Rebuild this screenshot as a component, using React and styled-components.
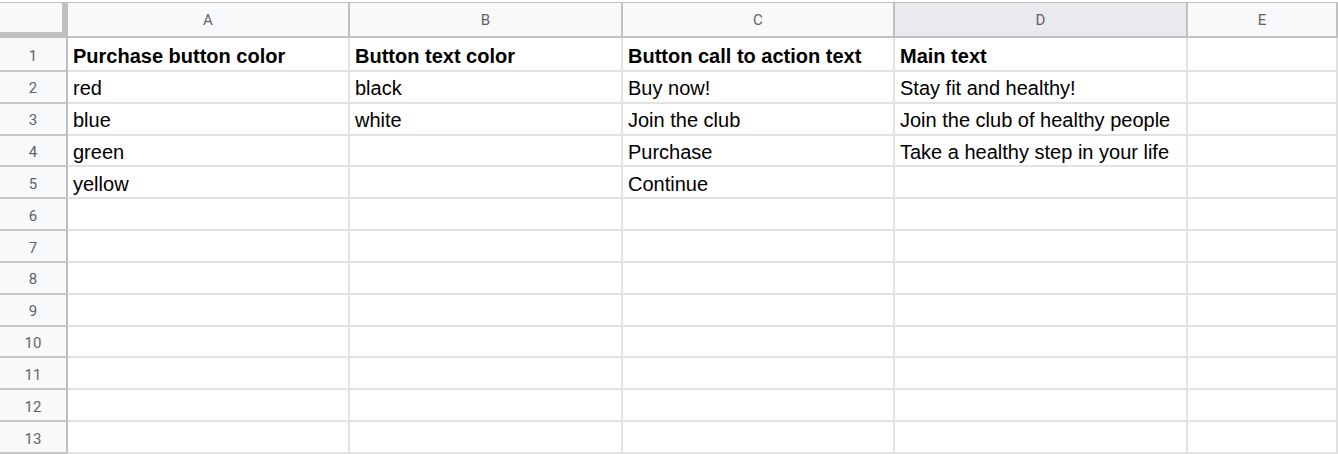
import React from "react";
import styled, { createGlobalStyle } from "styled-components";

const Global = createGlobalStyle`
  html, body { margin: 0; padding: 0; background: #ffffff; overflow: hidden; }
  #root { width: 1338px; height: 454px; overflow: hidden; }
`;

const Sheet = styled.div`
  display: grid;
  grid-template-columns: 68px 282px 273px 272px 293px 1fr;
  grid-template-rows: 36px 34px repeat(12, 31.833px);
  padding-top: 2px;
  background: #ffffff;
  width: 1338px;
`;

const Corner = styled.div`
  box-sizing: border-box;
  background: #f8f9fa;
  border-top: 1px solid #c0c0c0;
  border-right: 6px solid #c0c0c0;
  border-bottom: 6px solid #c0c0c0;
`;

const ColHeader = styled.div`
  box-sizing: border-box;
  display: flex;
  align-items: center;
  justify-content: center;
  background: ${(p) => (p.$selected ? "#e8eaed" : "#f8f9fa")};
  border-top: 1px solid #c0c0c0;
  border-right: 2px solid #c0c0c0;
  border-bottom: 2px solid #c0c0c0;
  font-family: Roboto, "Liberation Sans", sans-serif;
  font-size: 15px;
  color: #5f6368;
  padding-top: 1px;
`;

const RowHeader = styled.div`
  box-sizing: border-box;
  display: flex;
  align-items: center;
  justify-content: center;
  padding-top: 3px;
  background: #f8f9fa;
  border-right: 2px solid #c0c0c0;
  border-bottom: 2px solid #c4c7c5;
  font-family: Roboto, "Liberation Sans", sans-serif;
  font-size: 15px;
  color: #5f6368;
`;

const Cell = styled.div`
  box-sizing: border-box;
  display: flex;
  align-items: center;
  padding: 4px 5px 0;
  border-right: 2px solid #e2e2e2;
  border-bottom: 2px solid #e2e2e2;
  font-family: Arial, "Liberation Sans", sans-serif;
  font-size: 20px;
  font-weight: ${(p) => (p.$bold ? 700 : 400)};
  color: #000000;
  white-space: nowrap;
  overflow: hidden;
`;

const columns = ["A", "B", "C", "D", "E"];

const data = [
  ["Purchase button color", "Button text color", "Button call to action text", "Main text", ""],
  ["red", "black", "Buy now!", "Stay fit and healthy!", ""],
  ["blue", "white", "Join the club", "Join the club of healthy people", ""],
  ["green", "", "Purchase", "Take a healthy step in your life", ""],
  ["yellow", "", "Continue", "", ""],
];

export default function App() {
  const rows = Array.from({ length: 13 }, (_, i) => data[i] || ["", "", "", "", ""]);
  return (
    <>
      <Global />
      <Sheet>
        <Corner />
        {columns.map((c) => (
          <ColHeader key={c} $selected={c === "D"}>
            {c}
          </ColHeader>
        ))}
        {rows.map((row, r) => (
          <React.Fragment key={r}>
            <RowHeader>{r + 1}</RowHeader>
            {row.map((v, c) => (
              <Cell key={c} $bold={r === 0}>
                {v}
              </Cell>
            ))}
          </React.Fragment>
        ))}
      </Sheet>
    </>
  );
}
